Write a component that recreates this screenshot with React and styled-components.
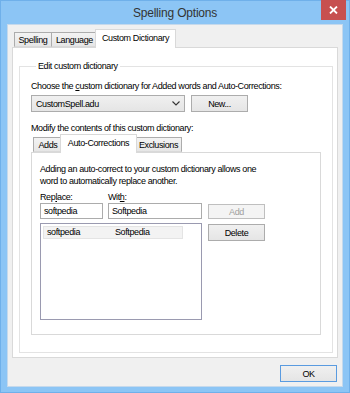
import React from 'react';
import styled, { createGlobalStyle } from 'styled-components';

const Global = createGlobalStyle`
   body {
      margin: 0;
      font-family: "Liberation Sans", Arial, sans-serif;
      font-size: 9px;
      letter-spacing: -0.38px;
      color: #000;
   }
`;

const Window = styled.div`
   width: 350px;
   height: 393px;
   box-sizing: border-box;
   background: #8cc5f5;
   border: 1px solid #6fb0ea;
   display: flex;
   flex-direction: column;
`;

const TitleBar = styled.div`
   height: 23px;
   display: grid;
   grid-template-columns: 1fr auto 1fr;
   align-items: start;
`;

const Title = styled.div`
   grid-column: 2;
   font-size: 12px;
   letter-spacing: -0.2px;
   line-height: 24px;
   color: #333;
`;

const CloseBtn = styled.div`
   grid-column: 3;
   justify-self: end;
   margin-top: -1px;
   margin-right: 3px;
   width: 25px;
   height: 20px;
   background: #c75050;
   display: flex;
   align-items: center;
   justify-content: center;
`;

const Client = styled.div`
   margin: 0 6px;
   height: 363px;
   box-sizing: border-box;
   background: #f0f0f0;
   border: 1px solid #c5d9ec;
   padding: 4px 4px 0 4px;
   display: flex;
   flex-direction: column;
`;

const TabStrip = styled.div`
   display: flex;
   align-items: flex-end;
   height: ${p => p.$h || 18}px;
   margin-top: ${p => p.$mt || 0}px;
   padding-left: ${p => p.$indent || 1}px;
   position: relative;
   z-index: 1;
`;

const Tab = styled.div`
   box-sizing: border-box;
   width: ${p => p.$w}px;
   height: ${p => (p.$active ? 19 : 15)}px;
   margin-bottom: ${p => (p.$active ? -1 : 0)}px;
   margin-left: ${p => (p.$active ? -2 : 0)}px;
   margin-right: ${p => (p.$active ? -2 : -1)}px;
   padding-top: ${p => (p.$active ? 2 : 1)}px;
   text-align: center;
   border: 1px solid ${p => (p.$active ? '#d9d9d9' : '#acacac')};
   border-bottom: ${p => (p.$active ? 'none' : '1px solid #d9d9d9')};
   background: ${p => (p.$active ? '#fff' : 'linear-gradient(#f3f3f3, #e6e6e6)')};
   position: relative;
   z-index: ${p => (p.$active ? 2 : 1)};
   line-height: 12px;
   white-space: nowrap;
`;

const Panel = styled.div`
   box-sizing: border-box;
   height: 311px;
   width: 326px;
   background: #fff;
   border: 1px solid #d9d9d9;
   padding: 12px 4px 4px 6px;
   display: flex;
`;

const Group = styled.fieldset`
   flex: 1;
   margin: 0;
   padding: 0 11px 17px 11px;
   border: 1px solid #e3e3e3;
   display: flex;
   flex-direction: column;
   min-width: 0;
`;

const Legend = styled.legend`
   padding: 0 2px;
   margin-left: 5px;
   line-height: 12px;
`;

const Label = styled.div`
   line-height: ${p => p.$lh || 12}px;
   margin-top: ${p => p.$mt || 0}px;
   white-space: nowrap;
`;

const Key = styled.span`
   text-decoration: underline;
`;

const Row = styled.div`
   display: flex;
   gap: 6px;
   margin-top: ${p => p.$mt || 0}px;
`;

const Combo = styled.div`
   box-sizing: border-box;
   width: 154px;
   height: 17px;
   border: 1px solid #acacac;
   background: linear-gradient(#f0f0f0, #e5e5e5);
   display: flex;
   align-items: center;
   justify-content: space-between;
   padding: 0 4px 0 4px;
`;

const Button = styled.div`
   box-sizing: border-box;
   width: 57px;
   height: ${p => p.$h || 17}px;
   border: 1px solid ${p => (p.$default ? '#5a9be0' : p.$disabled ? '#bfbfbf' : '#acacac')};
   background: ${p => (p.$disabled ? '#f4f4f4' : 'linear-gradient(#f0f0f0, #e5e5e5)')};
   color: ${p => (p.$disabled ? '#a0a0a0' : '#000')};
   display: flex;
   align-items: center;
   justify-content: center;
`;

const SubPanel = styled.div`
   box-sizing: border-box;
   flex: 1;
   border: 1px solid #d9d9d9;
   background: #fff;
   padding: 10px 8px 0 8px;
`;

const Form = styled.div`
   display: grid;
   grid-template-columns: 63px 94px 57px;
   grid-template-rows: 12px 16px 97px;
   column-gap: 5px;
   margin-top: 4px;
`;

const Input = styled.div`
   box-sizing: border-box;
   height: 16px;
   border: 1px solid #acacac;
   padding: 0 3px;
   line-height: 14px;
   background: #fff;
`;

const Buttons = styled.div`
   margin-left: 1px;
   display: flex;
   flex-direction: column;
   padding-top: ${p => p.$pt || 0}px;
`;

const List = styled.div`
   grid-column: 1 / span 2;
   margin-top: 4px;
   box-sizing: border-box;
   height: 97px;
   border: 1px solid #9a9ab0;
   padding: 2px;
`;

const ListItem = styled.div`
   display: flex;
   width: 140px;
   height: 13px;
   background: #f3f3f3;
   border: 1px solid #e4e4e4;
   box-sizing: border-box;
   line-height: 11px;
   padding-left: 3px;
`;

const Cell = styled.span`
   width: ${p => p.$w}px;
`;

const Footer = styled.div`
   display: flex;
   justify-content: flex-end;
   padding: 7px 1px 0 0;
`;

const Chevron = () => (
   <svg width="8" height="5" viewBox="0 0 8 5">
      <path d="M0.5 0.5 L4 4 L7.5 0.5" fill="none" stroke="#333" strokeWidth="1.1" />
   </svg>
);

const App = () => {
   return (
      <Window>
         <Global />
         <TitleBar>
            <Title>Spelling Options</Title>
            <CloseBtn>
               <svg width="9" height="8" viewBox="0 0 9 8">
                  <path d="M1 0.5 L8 7.5 M8 0.5 L1 7.5" stroke="#fff" strokeWidth="1.8" />
               </svg>
            </CloseBtn>
         </TitleBar>
         <Client>
            <TabStrip $indent={2}>
               <Tab $w={38}>Spelling</Tab>
               <Tab $w={47}>Language</Tab>
               <Tab $w={81} $active>Custom Dictionary</Tab>
            </TabStrip>
            <Panel>
               <Group>
                  <Legend>Edit custom dictionary</Legend>
                  <Label $mt={8}>Choose the <Key>c</Key>ustom dictionary for Added words and Auto-Corrections:</Label>
                  <Row $mt={3}>
                     <Combo>
                        <span>CustomSpell.adu</span>
                        <Chevron />
                     </Combo>
                     <Button>New...</Button>
                  </Row>
                  <Label $mt={10}>Modify the contents of this custom dictionary:</Label>
                  <TabStrip $indent={2} $h={16} $mt={2}>
                     <Tab $w={30}>Adds</Tab>
                     <Tab $w={77} $active>Auto-Corrections</Tab>
                     <Tab $w={47}>Exclusions</Tab>
                  </TabStrip>
                  <SubPanel>
                     <Label>Adding an auto-correct to your custom dictionary allows one</Label>
                     <Label>word to automatically replace another.</Label>
                     <Form>
                        <Label>Rep<Key>l</Key>ace:</Label>
                        <Label>Wit<Key>h</Key>:</Label>
                        <div />
                        <Input>softpedia</Input>
                        <Input>Softpedia</Input>
                        <Buttons $pt={1}>
                           <Button $disabled $h={16}>Add</Button>
                        </Buttons>
                        <List>
                           <ListItem>
                              <Cell $w={68}>softpedia</Cell>
                              <Cell $w={66}>Softpedia</Cell>
                           </ListItem>
                        </List>
                        <Buttons $pt={5}>
                           <Button>Delete</Button>
                        </Buttons>
                     </Form>
                  </SubPanel>
               </Group>
            </Panel>
            <Footer>
               <Button $default>OK</Button>
            </Footer>
         </Client>
      </Window>
   );
};

export default App;
